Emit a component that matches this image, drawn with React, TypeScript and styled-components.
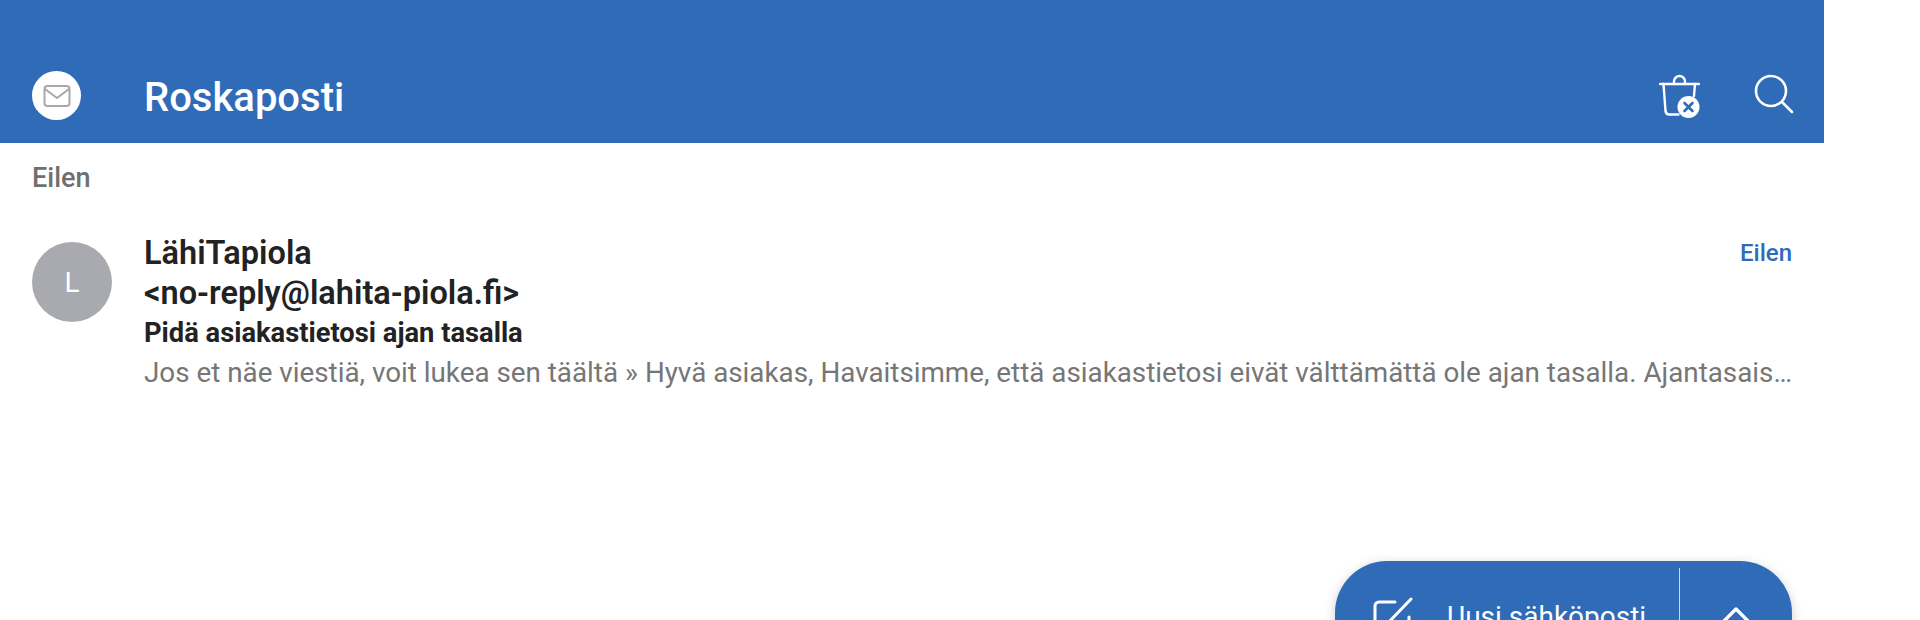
import React from 'react';
import styled, { createGlobalStyle } from 'styled-components';

const GlobalStyle = createGlobalStyle`
    html, body {
        margin: 0;
        height: 620px;
        overflow: hidden;
        background: #fff;
        font-family: Roboto, "Liberation Sans", sans-serif;
    }
`;

const Page = styled.div`
    position: relative;
    width: 1920px;
    height: 620px;
    overflow: hidden;
    background: #fff;
`;
const Screen = styled.div`
    width: 1824px;
`;
const Toolbar = styled.header`
    height: 143px;
    background: #306bb8;
    display: flex;
    align-items: flex-end;
    padding: 0 30px 23px 32px;
    box-sizing: border-box;
    color: #fff;
`;
const MailBadge = styled.div`
    width: 49px;
    height: 49px;
    border-radius: 50%;
    background: #fff;
    display: flex;
    align-items: center;
    justify-content: center;
    flex: none;
`;
const Title = styled.h1`
    margin: 0 0 0 63px;
    flex: 1;
    font-size: 40px;
    line-height: 45px;
    font-weight: 500;
`;
const ToolIcons = styled.div`
    display: flex;
    align-items: center;
    gap: 54px;
    padding-bottom: 2px;
`;
const DayLabel = styled.div`
    padding: 20px 32px 0;
    font-size: 27px;
    line-height: 30px;
    font-weight: 500;
    color: #6f6f6f;
`;
const MessageRow = styled.div`
    display: flex;
    padding: 40px 32px 0;
`;
const Avatar = styled.div`
    width: 80px;
    height: 80px;
    border-radius: 50%;
    background: #a9a9b0;
    color: #fff;
    font-size: 28px;
    display: flex;
    align-items: center;
    justify-content: center;
    flex: none;
    margin-top: 9px;
`;
const MessageBody = styled.div`
    margin-left: 32px;
    flex: 1;
    min-width: 0;
`;
const SenderRow = styled.div`
    display: flex;
    justify-content: space-between;
    align-items: flex-start;
`;
const Sender = styled.div`
    font-size: 32.5px;
    line-height: 40px;
    font-weight: 600;
    color: #222;
`;
const Time = styled.div`
    font-size: 24px;
    line-height: 40px;
    font-weight: 500;
    color: #306bb8;
`;
const Subject = styled.div`
    font-size: 27.3px;
    line-height: 40px;
    font-weight: 700;
    color: #222;
`;
const Preview = styled.div`
    font-size: 27.8px;
    line-height: 40px;
    color: #767676;
    white-space: nowrap;
`;
const Fab = styled.div`
    position: absolute;
    left: 1335px;
    top: 561px;
    width: 457px;
    height: 120px;
    border-radius: 52px;
    background: #306bb8;
    color: #fff;
    display: flex;
    box-shadow: 0 3px 12px rgba(0, 0, 0, 0.2);
`;
const FabMain = styled.div`
    display: flex;
    align-items: flex-start;
    padding: 36px 0 0 36px;
    gap: 32px;
    width: 344px;
    box-sizing: border-box;
    font-size: 28px;
    line-height: 40px;
    white-space: nowrap;
`;
const FabDivider = styled.div`
    width: 1px;
    height: 110px;
    margin-top: 7px;
    background: rgba(255, 255, 255, 0.75);
    flex: none;
`;
const FabToggle = styled.div`
    flex: 1;
    display: flex;
    justify-content: center;
    padding-top: 44px;
`;

const App: React.FC = () => {
    return (
        <Page>
            <GlobalStyle />
            <Screen>
                <Toolbar>
                    <MailBadge>
                        <svg width="28" height="24" viewBox="0 0 28 24" fill="none" stroke="#a8a8a8" strokeWidth="2">
                            <rect x="1.5" y="2" width="25" height="20" rx="3" />
                            <path d="M2 5l12 9 12-9" strokeLinejoin="round" />
                        </svg>
                    </MailBadge>
                    <Title>Roskaposti</Title>
                    <ToolIcons>
                        <svg width="41" height="49" viewBox="0 -6 41 49" fill="none" stroke="#fff" strokeWidth="2.4" strokeLinecap="round">
                            <path d="M1 9h39" />
                            <path d="M15 9V6.5a5.5 5.5 0 0 1 11 0V9" />
                            <path d="M4.5 9l2 27a4 4 0 0 0 4 3.5h9" />
                            <path d="M36 9l-1 12" />
                            <circle cx="29.5" cy="32" r="11" fill="#fff" stroke="none" />
                            <path d="M25.5 28l8 8M33.5 28l-8 8" stroke="#306bb8" strokeWidth="2.6" />
                        </svg>
                        <svg width="40" height="40" viewBox="0 0 40 40" fill="none" stroke="#fff" strokeWidth="2.6" strokeLinecap="round">
                            <circle cx="17" cy="17" r="15" />
                            <path d="M28 28L38 38" />
                        </svg>
                    </ToolIcons>
                </Toolbar>
                <DayLabel>Eilen</DayLabel>
                <MessageRow>
                    <Avatar>L</Avatar>
                    <MessageBody>
                        <SenderRow>
                            <Sender>LähiTapiola</Sender>
                            <Time>Eilen</Time>
                        </SenderRow>
                        <Sender>&lt;no-reply@lahita-piola.fi&gt;</Sender>
                        <Subject>Pidä asiakastietosi ajan tasalla</Subject>
                        <Preview>Jos et näe viestiä, voit lukea sen täältä » Hyvä asiakas, Havaitsimme, että asiakastietosi eivät välttämättä ole ajan tasalla. Ajantasais…</Preview>
                    </MessageBody>
                </MessageRow>
            </Screen>
            <Fab>
                <FabMain>
                    <svg width="44" height="44" viewBox="0 0 44 44" fill="none" stroke="#fff" strokeWidth="3" strokeLinecap="round" strokeLinejoin="round">
                        <path d="M24 5H8a4 4 0 0 0-4 4v26a4 4 0 0 0 4 4h26a4 4 0 0 0 4-4V20" />
                        <path d="M16 27L40 2" />
                    </svg>
                    Uusi sähköposti
                </FabMain>
                <FabDivider />
                <FabToggle>
                    <svg width="36" height="22" viewBox="0 0 36 22" fill="none" stroke="#fff" strokeWidth="3.4" strokeLinecap="round" strokeLinejoin="round">
                        <path d="M3 19L18 4l15 15" />
                    </svg>
                </FabToggle>
            </Fab>
        </Page>
    );
};

export default App;
